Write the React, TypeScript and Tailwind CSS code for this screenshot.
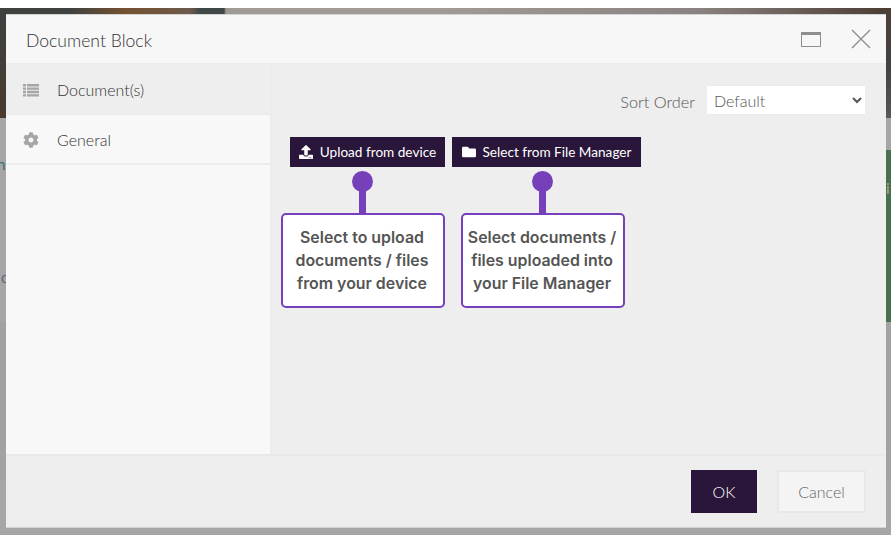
import { FaCog, FaFolder, FaUpload } from "react-icons/fa";

function ListIcon() {
  return (
    <svg viewBox="0 0 16 14" className="h-[14px] w-4 fill-[#a5a5a5]">
      <path d="M0 1h3v2.4H0zM4 1h12v2.4H4zM0 4.4h3v2.4H0zM4 4.4h12v2.4H4zM0 7.8h3v2.4H0zM4 7.8h12v2.4H4zM0 11.2h3v2.4H0zM4 11.2h12v2.4H4z" />
    </svg>
  );
}

function Callout({ lines }: { lines: string[] }) {
  return (
    <div className="flex w-[164px] flex-col items-center">
      <div className="-ml-px h-[21px] w-[21px] rounded-full bg-[#7540b9]" />
      <div className="-mt-px -ml-px h-[22px] w-[7px] bg-[#7540b9]" />
      <div className="flex h-[95px] w-full flex-col items-center justify-center rounded-[5px] border-2 border-[#7540b9] bg-white pr-0.5 font-['Inter',sans-serif] text-[15.9px] font-semibold leading-[23px] text-[#555]">
        {lines.map((line) => (
          <span key={line}>{line}</span>
        ))}
      </div>
    </div>
  );
}

export default function App() {
  return (
    <div className="relative h-[535px] w-[891px] overflow-hidden bg-white font-['Lato',sans-serif]">
      {/* page behind the dialog, under the overlay */}
      <div className="h-2" />
      <div className="h-[6px] bg-[linear-gradient(90deg,#3d423f_0,#3d423f_70px,#75512f_125px,#6d5a4c_190px,#3f4846_200px,#3f4846_224px,#a09a96_226px,#a09a96_450px,#8a8280_700px,#4e3f36_880px)]" />
      <div className="flex h-[104px] justify-between">
        <div className="w-[6px] bg-gradient-to-b from-[#3d423f] to-[#4a3a2e]" />
        <div className="w-[5px] bg-gradient-to-b from-[#4e3f36] via-[#3f4243] to-[#555958]" />
      </div>
      <div className="h-8 bg-[#a6a6a6]" />
      <div className="flex h-[172px] justify-between bg-[#a6a6a6]">
        <div className="flex flex-col text-[15px] leading-5">
          <span className="-ml-[3px] mt-[4px] text-[#3a6b73]">n</span>
          <span className="ml-px mt-[93px] text-[#55677f]">c</span>
        </div>
        <div className="w-[5px] overflow-hidden bg-[#46704f] pt-[28px] text-[15px] leading-5 text-[#b9a67c]">i</div>
      </div>
      <div className="h-[213px] bg-[#a6a6a6]">
        <div className="h-[158px] bg-[#a2a2a2]" />
      </div>

      <div className="absolute left-[6px] top-[14px] flex h-[514px] w-[880px] flex-col border-t border-b border-[#d4d4d4] bg-[#eeeeee]">
        <header className="flex h-[50px] shrink-0 items-center justify-between border-b-2 border-[#ececec] bg-[#f7f7f7] pl-5 pr-[15px] pt-1">
          <h1 className="text-[17.6px] font-light text-[#333]">Document Block</h1>
          <div className="flex -translate-y-[2px] items-center gap-[30px]">
            <div className="h-[15px] w-5 border border-t-[3px] border-[#8f8f8f]" />
            <svg viewBox="0 0 20 20" className="h-5 w-5 stroke-[#8f8f8f]">
              <path d="M1 1l18 18M19 1L1 19" strokeWidth="1.4" fill="none" />
            </svg>
          </div>
        </header>

        <div className="flex min-h-0 flex-1">
          <aside className="w-[266px] shrink-0 border-r-2 border-[#ececec] bg-[#f8f8f8]">
            <div className="flex h-[50px] items-center gap-[18px] border-b-2 border-[#ececec] bg-[#eeeeee] pl-[17px] pt-0.5 text-[16px] font-light text-[#333]">
              <ListIcon />
              Document(s)
            </div>
            <div className="flex h-[50px] items-center gap-[18px] border-b-2 border-[#ececec] pl-[17px] pt-0.5 text-[16px] font-light text-[#333]">
              <FaCog className="h-4 w-4 text-[#a5a5a5]" />
              General
            </div>
          </aside>

          <main className="flex-1 pl-[18px] pr-5 pt-5">
            <div className="flex items-center justify-end gap-[11px]">
              <span className="mt-1 text-[16.3px] font-light text-[#555]">Sort Order</span>
              <select className="h-[30px] w-[160px] border border-[#ececec] bg-white pl-[3px] text-[16px] font-light text-[#555]">
                <option>Default</option>
              </select>
            </div>
            <div className="mt-[22px] flex gap-[7px]">
              <button className="flex h-[30px] w-[155px] items-center justify-center gap-[7px] bg-[#29163a] text-[13.6px] text-white">
                <FaUpload className="h-[14px] w-[14px]" />
                Upload from device
              </button>
              <button className="flex h-[30px] w-[189px] items-center justify-center gap-[7px] bg-[#29163a] text-[13.6px] text-white">
                <FaFolder className="h-[14px] w-[14px]" />
                Select from File Manager
              </button>
            </div>
            <div className="mt-1 -ml-[9px] flex gap-4">
              <Callout lines={["Select to upload", "documents / files", "from your device"]} />
              <Callout lines={["Select documents /", "files uploaded into", "your File Manager"]} />
            </div>
          </main>
        </div>

        <footer className="flex h-[73px] shrink-0 items-center justify-end gap-5 border-t-2 border-[#e8e8e8] pr-5">
          <button className="h-[43px] w-[66px] bg-[#29163a] text-[16px] font-light text-white">OK</button>
          <button className="h-[43px] w-[89px] border-2 border-[#e8e8e8] bg-[#f4f4f4] text-[16px] font-light text-[#666]">
            Cancel
          </button>
        </footer>
      </div>
    </div>
  );
}
